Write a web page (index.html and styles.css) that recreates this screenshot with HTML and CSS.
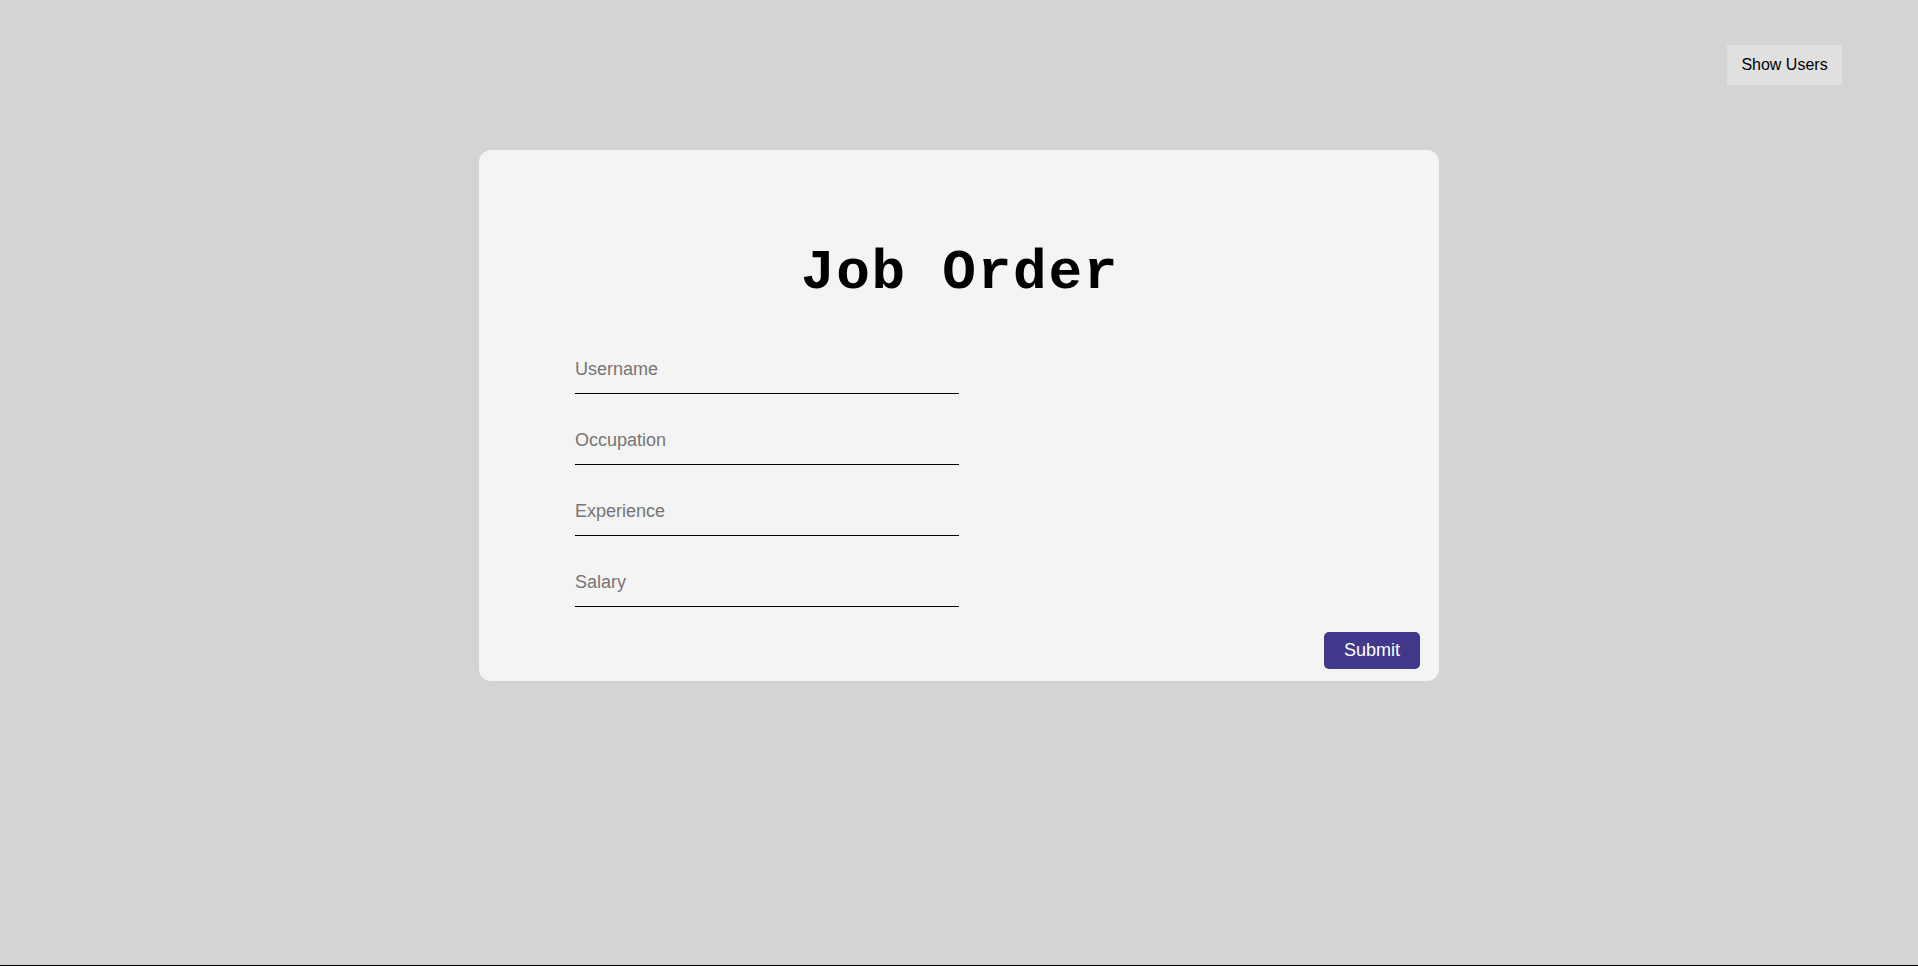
FILE: index.html
```html
<!DOCTYPE html>
<html lang="en">
<head>
<meta charset="utf-8">
<title>Job Order</title>
<link rel="stylesheet" href="styles.css">
</head>
<body>
<div class="page">
  <header class="topbar">
    <button class="show-users" type="button">Show Users</button>
  </header>
  <main class="card">
    <h1 class="title">Job Order</h1>
    <form class="form">
      <input class="field" type="text" placeholder="Username">
      <input class="field" type="text" placeholder="Occupation">
      <input class="field" type="text" placeholder="Experience">
      <input class="field" type="text" placeholder="Salary">
      <div class="actions">
        <button class="submit" type="button">Submit</button>
      </div>
    </form>
  </main>
</div>
</body>
</html>
```

FILE: styles.css
```css
html, body {
  margin: 0;
  padding: 0;
}
body {
  background: #d4d4d4;
  font-family: "Liberation Sans", Arial, sans-serif;
}
.page {
  height: 100vh;
  box-sizing: border-box;
  border-bottom: 1px solid #000;
  overflow: hidden;
}
.topbar {
  display: flex;
  justify-content: flex-end;
  padding: 45px 76px 0 0;
}
.show-users {
  width: 115px;
  height: 40px;
  border: none;
  background: #e0e0e0;
  color: #000;
  font-family: "Liberation Sans", Arial, sans-serif;
  font-size: 16px;
  padding: 0;
}
.card {
  width: 960px;
  height: 531px;
  box-sizing: border-box;
  margin: 65px auto 0;
  background: #f4f4f4;
  border-radius: 12px;
  display: flex;
  flex-direction: column;
}
.title {
  margin: 91px 0 0;
  padding-left: 2px;
  text-align: center;
  font-family: "Liberation Mono", "Courier New", monospace;
  font-weight: bold;
  font-size: 56px;
  line-height: 64px;
  letter-spacing: 1.75px;
  color: #000;
}
.form {
  display: flex;
  flex-direction: column;
  align-items: flex-start;
  padding: 44px 19px 12px 96px;
  gap: 26px;
}
.field {
  width: 384px;
  box-sizing: border-box;
  height: 45px;
  padding: 10px 0 14px;
  border: none;
  border-bottom: 1px solid #000;
  background: transparent;
  font-family: "Liberation Sans", Arial, sans-serif;
  font-size: 18px;
  line-height: 20px;
  outline: none;
}
.field::placeholder {
  color: #757575;
}
.actions {
  align-self: stretch;
  display: flex;
  justify-content: flex-end;
  margin-top: -1px;
}
.submit {
  width: 96px;
  height: 37px;
  border: none;
  border-radius: 5px;
  background: #41398c;
  color: #fff;
  font-family: "Liberation Sans", Arial, sans-serif;
  font-size: 18px;
  padding: 0;
}
```
